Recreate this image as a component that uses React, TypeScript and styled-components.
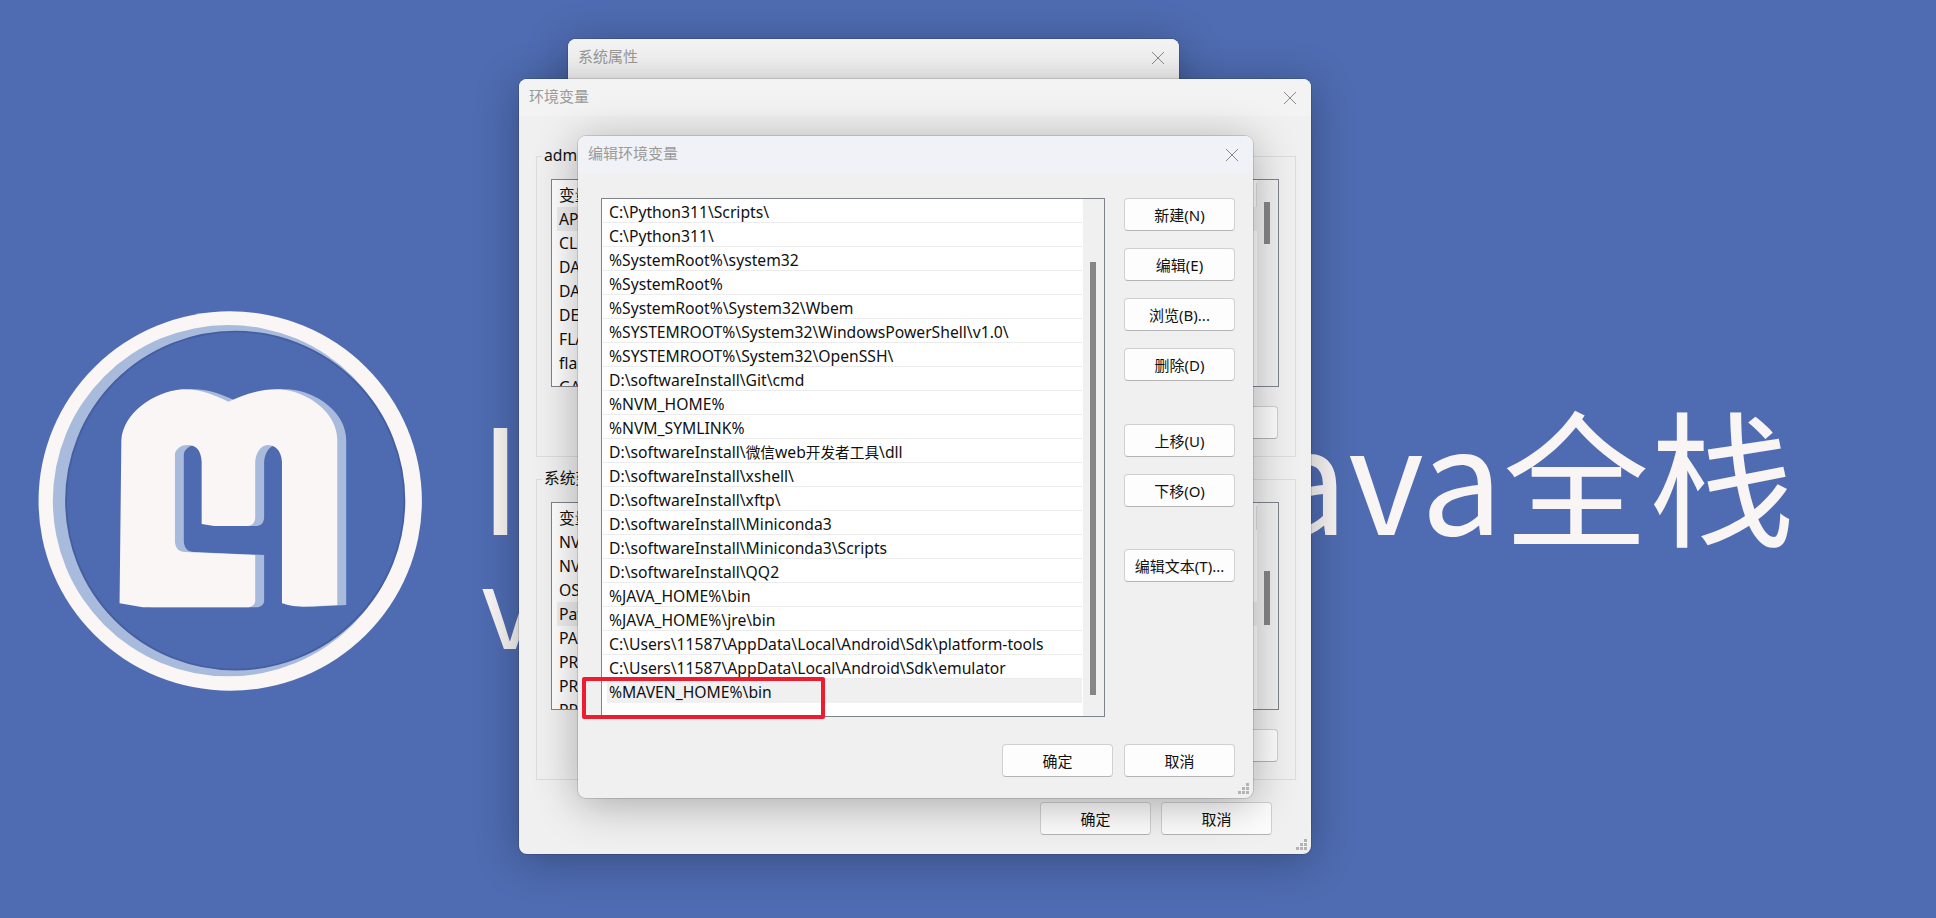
import styled, { createGlobalStyle } from 'styled-components';

const UI_FONT = '"Noto Sans", "Noto Sans CJK SC", sans-serif';

const GlobalStyle = createGlobalStyle`
  html, body {
    margin: 0;
    padding: 0;
    background: #4f6cb2;
  }
  * {
    box-sizing: border-box;
  }
`;

const Page = styled.div`
  position: relative;
  width: 1936px;
  height: 918px;
  overflow: hidden;
  background: #4f6cb2;
  font-family: ${UI_FONT};
  font-size: 15px;
  color: #111;
`;

const Banner = styled.div`
  display: flex;
  align-items: flex-start;
  padding-top: 280px;
`;

const Logo = styled.svg`
  flex: none;
  width: 464px;
  height: 430px;
`;

const BannerText = styled.div`
  display: flex;
  flex-direction: column;
  width: 1316px;
  margin-left: 15px;
  color: #f9f5f5;
  font-family: "Noto Sans CJK SC", sans-serif;
  line-height: 1;
`;

const BannerLine = styled.div`
  display: flex;
  justify-content: space-between;
  font-size: 146px;
  margin-top: 119px;
`;

const BannerSubline = styled.div`
  font-size: 110px;
  margin: 1px 0 0 2px;
`;

const Window = styled.div<{ $x: number; $y: number; $w: number; $h: number; $z: number }>`
  position: absolute;
  left: ${(p) => p.$x}px;
  top: ${(p) => p.$y}px;
  width: ${(p) => p.$w}px;
  height: ${(p) => p.$h}px;
  z-index: ${(p) => p.$z};
  display: flex;
  flex-direction: column;
  background: #f0f0f0;
  border-radius: 8px;
  box-shadow: 0 6px 44px rgba(0, 0, 0, 0.3), 0 0 0 1px rgba(0, 0, 0, 0.12);
  overflow: hidden;
`;

const TitleBar = styled.div<{ $tint?: string }>`
  flex: none;
  display: flex;
  align-items: center;
  justify-content: space-between;
  height: 37px;
  padding: 0 14px 0 10px;
  background: ${(p) => p.$tint || '#f3f3f3'};
  color: #9a9a9a;
  font-size: 15px;
`;

const TitleText = styled.span`
  margin-top: -4px;
`;

const CloseIcon = styled.svg`
  flex: none;
  width: 14px;
  height: 14px;
  stroke: #8a8a8a;
  stroke-width: 1;
`;

const EnvBody = styled.div`
  flex: 1;
  display: flex;
  flex-direction: column;
  gap: 22px;
  padding: 40px 15px 0 17px;
`;

const GroupBox = styled.div<{ $h: number }>`
  position: relative;
  height: ${(p) => p.$h}px;
  padding: 22px 16px 0 14px;
  border: 1px solid #dcdcdc;
`;

const GroupLabel = styled.span`
  position: absolute;
  top: -13px;
  left: 5px;
  padding: 0 2px;
  background: #f0f0f0;
  font-size: 15.7px;
  line-height: 22px;
  white-space: nowrap;
`;

const ListFrame = styled.div<{ $h: number }>`
  display: flex;
  height: ${(p) => p.$h}px;
  background: #fff;
  border: 1px solid #7f838c;
  overflow: hidden;
`;

const EnvRows = styled.div`
  flex: 1;
  min-width: 0;
  padding: 3px 0 0 5px;
`;

const EnvRow = styled.div<{ $selected?: boolean; $header?: boolean }>`
  height: 24px;
  padding-left: 2px;
  font-size: 15.7px;
  line-height: 25px;
  white-space: nowrap;
  background: ${(p) => (p.$selected ? '#f0f0f0' : 'transparent')};
  border-right: ${(p) => (p.$header ? '1px solid #dedede' : 'none')};
`;

const ScrollTrack = styled.div`
  flex: none;
  width: 21px;
  background: #f0f0f0;
`;

const ScrollThumb = styled.div<{ $top: number; $h: number }>`
  width: 6px;
  height: ${(p) => p.$h}px;
  margin: ${(p) => p.$top}px 0 0 7px;
  background: #868686;
`;

const ButtonRow = styled.div<{ $top: number; $right: number; $gap: number }>`
  display: flex;
  justify-content: flex-end;
  gap: ${(p) => p.$gap}px;
  margin: ${(p) => p.$top}px ${(p) => p.$right}px 0 0;
`;

const EditFooter = styled(ButtonRow)`
  flex: none;
  padding-bottom: 21px;
`;

const Button = styled.button<{ $top?: number }>`
  flex: none;
  display: block;
  width: 111px;
  height: 33px;
  margin: ${(p) => p.$top ?? 0}px 0 0;
  padding: 0;
  background: #fdfdfd;
  border: 1px solid #d0d0d0;
  border-bottom-color: #b4b4b4;
  border-radius: 4px;
  color: #111;
  font: inherit;
`;

const EditBody = styled.div`
  flex: 1;
  display: flex;
  gap: 19px;
  padding: 25px 18px 0 23px;
`;

const PathFrame = styled(ListFrame)`
  flex: none;
  width: 504px;
`;

const PathRows = styled.div`
  flex: 1;
  min-width: 0;
  padding: 0 1px 0 1px;
`;

const PathRow = styled.div<{ $selected?: boolean }>`
  height: 24px;
  padding-left: 6px;
  font-size: 15.7px;
  line-height: 26px;
  white-space: nowrap;
  overflow: hidden;
  border-bottom: 1px solid ${(p) => (p.$selected ? 'transparent' : '#ececec')};
  background: ${(p) => (p.$selected ? 'linear-gradient(to right, #fff 4px, #f0f0f0 4px)' : 'transparent')};
`;

const CjkRun = styled.span`
  font-size: 14.67px;
`;

const SideButtons = styled.div`
  flex: none;
  display: flex;
  flex-direction: column;
`;

const Highlight = styled.div`
  position: absolute;
  left: 4px;
  top: 541px;
  width: 243px;
  height: 42px;
  border: 4px solid #ee1c2e;
  border-radius: 2px;
`;

const Grip = styled.svg`
  position: absolute;
  right: 3px;
  bottom: 3px;
  width: 12px;
  height: 12px;
  fill: #b4b4b4;
`;

const userVars = ['AP', 'CL', 'DA', 'DA', 'DE', 'FLA', 'fla', 'GA'];
const systemVars = ['NV', 'NV', 'OS', 'Pat', 'PA', 'PR', 'PR', 'PR'];

const paths = [
  'C:\\Python311\\Scripts\\',
  'C:\\Python311\\',
  '%SystemRoot%\\system32',
  '%SystemRoot%',
  '%SystemRoot%\\System32\\Wbem',
  '%SYSTEMROOT%\\System32\\WindowsPowerShell\\v1.0\\',
  '%SYSTEMROOT%\\System32\\OpenSSH\\',
  'D:\\softwareInstall\\Git\\cmd',
  '%NVM_HOME%',
  '%NVM_SYMLINK%',
  'D:\\softwareInstall\\微信web开发者工具\\dll',
  'D:\\softwareInstall\\xshell\\',
  'D:\\softwareInstall\\xftp\\',
  'D:\\softwareInstall\\Miniconda3',
  'D:\\softwareInstall\\Miniconda3\\Scripts',
  'D:\\softwareInstall\\QQ2',
  '%JAVA_HOME%\\bin',
  '%JAVA_HOME%\\jre\\bin',
  'C:\\Users\\11587\\AppData\\Local\\Android\\Sdk\\platform-tools',
  'C:\\Users\\11587\\AppData\\Local\\Android\\Sdk\\emulator',
  '%MAVEN_HOME%\\bin',
];

const M_PATH =
  'M335 970 L340 480 C345 400 430 335 510 328 C560 326 600 345 640 365 C680 345 730 325 785 328 C865 335 945 400 945 480 L945 975 L850 980 C820 980 805 975 790 970 L790 545 C788 510 770 495 750 495 C730 495 715 520 715 550 L715 710 C715 730 705 738 690 738 L600 738 L565 732 L565 545 C563 510 550 495 525 495 C505 495 490 510 490 525 L490 785 C492 805 500 815 520 816 L715 825 L715 965 C712 978 700 982 690 982 L400 982 Z';

function Close() {
  return (
    <CloseIcon viewBox="0 0 14 14">
      <path d="M1 1 L13 13 M13 1 L1 13" fill="none" />
    </CloseIcon>
  );
}

function ResizeGrip() {
  return (
    <Grip viewBox="0 0 12 12">
      <rect x="8" y="0" width="3" height="3" />
      <rect x="4" y="4" width="3" height="3" />
      <rect x="8" y="4" width="3" height="3" />
      <rect x="0" y="8" width="3" height="3" />
      <rect x="4" y="8" width="3" height="3" />
      <rect x="8" y="8" width="3" height="3" />
    </Grip>
  );
}

function VarList({ rows, selected, h, thumbTop, thumbH }: {
  rows: string[];
  selected: number;
  h: number;
  thumbTop: number;
  thumbH: number;
}) {
  return (
    <ListFrame $h={h}>
      <EnvRows>
        <EnvRow $header>变量</EnvRow>
        {rows.map((row, i) => (
          <EnvRow key={i} $selected={i === selected}>{row}</EnvRow>
        ))}
      </EnvRows>
      <ScrollTrack>
        <ScrollThumb $top={thumbTop} $h={thumbH} />
      </ScrollTrack>
    </ListFrame>
  );
}

// Chinese runs in the path list sit a bit smaller than the latin around them
function PathText({ text }: { text: string }) {
  return (
    <>
      {text.split(/([\u4e00-\u9fff]+)/).map((part, i) =>
        i % 2 ? <CjkRun key={i}>{part}</CjkRun> : part
      )}
    </>
  );
}

export default function App() {
  return (
    <Page>
      <GlobalStyle />

      <Banner>
        <Logo viewBox="0 0 1300 1290" preserveAspectRatio="none">
          <ellipse cx="645" cy="663" rx="537" ry="569" fill="#faf6f6" />
          <ellipse cx="640" cy="662" rx="492" ry="527" fill="#a9bbdc" />
          <ellipse cx="659" cy="662" rx="474" ry="507" fill="#4e6bb1" stroke="#445e9f" strokeWidth="5" />
          <path d={M_PATH} fill="#a9bbdc" transform="translate(25 0)" />
          <path d={M_PATH} fill="#faf6f6" />
        </Logo>
        <BannerText>
          <BannerLine>
            <span>I</span>
            <span>Java全栈</span>
          </BannerLine>
          <BannerSubline>v</BannerSubline>
        </BannerText>
      </Banner>

      <Window $x={568} $y={39} $w={611} $h={400} $z={1}>
        <TitleBar>
          <TitleText>系统属性</TitleText>
          <Close />
        </TitleBar>
      </Window>

      <Window $x={519} $y={79} $w={792} $h={775} $z={2}>
        <TitleBar>
          <TitleText>环境变量</TitleText>
          <Close />
        </TitleBar>
        <EnvBody>
          <GroupBox $h={301}>
            <GroupLabel>admin 的用户变量</GroupLabel>
            <VarList rows={userVars} selected={0} h={208} thumbTop={22} thumbH={42} />
            <ButtonRow $top={19} $right={1} $gap={10}>
              <Button>新建(N)...</Button>
              <Button>编辑(E)...</Button>
              <Button>删除(D)</Button>
            </ButtonRow>
          </GroupBox>
          <GroupBox $h={301}>
            <GroupLabel>系统变量</GroupLabel>
            <VarList rows={systemVars} selected={3} h={208} thumbTop={68} thumbH={54} />
            <ButtonRow $top={19} $right={1} $gap={10}>
              <Button>新建(W)...</Button>
              <Button>编辑(I)...</Button>
              <Button>删除(L)</Button>
            </ButtonRow>
          </GroupBox>
          <ButtonRow $top={0} $right={24} $gap={10}>
            <Button>确定</Button>
            <Button>取消</Button>
          </ButtonRow>
        </EnvBody>
        <ResizeGrip />
      </Window>

      <Window $x={578} $y={136} $w={675} $h={662} $z={3}>
        <TitleBar $tint="#f0f2f7">
          <TitleText>编辑环境变量</TitleText>
          <Close />
        </TitleBar>
        <EditBody>
          <PathFrame $h={519}>
            <PathRows>
              {paths.map((path, i) => (
                <PathRow key={path} $selected={i === paths.length - 1}>
                  <PathText text={path} />
                </PathRow>
              ))}
            </PathRows>
            <ScrollTrack>
              <ScrollThumb $top={63} $h={433} />
            </ScrollTrack>
          </PathFrame>
          <SideButtons>
            <Button>新建(N)</Button>
            <Button $top={17}>编辑(E)</Button>
            <Button $top={17}>浏览(B)...</Button>
            <Button $top={17}>删除(D)</Button>
            <Button $top={43}>上移(U)</Button>
            <Button $top={17}>下移(O)</Button>
            <Button $top={42}>编辑文本(T)...</Button>
          </SideButtons>
        </EditBody>
        <EditFooter $top={0} $right={18} $gap={11}>
          <Button>确定</Button>
          <Button>取消</Button>
        </EditFooter>
        <Highlight />
        <ResizeGrip />
      </Window>
    </Page>
  );
}
